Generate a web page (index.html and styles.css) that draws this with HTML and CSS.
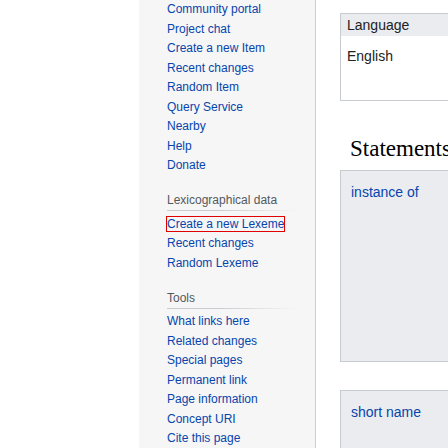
FILE: index.html
```html
<!DOCTYPE html>
<html>
<head>
<meta charset="utf-8">
<link rel="stylesheet" href="styles.css">
</head>
<body>
<div class="page">
  <div class="gutter"></div>
  <nav class="panel">
    <div class="portal">
      <ul>
        <li><a href="#">Community portal</a></li>
        <li><a href="#">Project chat</a></li>
        <li><a href="#">Create a new Item</a></li>
        <li><a href="#">Recent changes</a></li>
        <li><a href="#">Random Item</a></li>
        <li><a href="#">Query Service</a></li>
        <li><a href="#">Nearby</a></li>
        <li><a href="#">Help</a></li>
        <li><a href="#">Donate</a></li>
      </ul>
    </div>
    <div class="portal">
      <h3 class="portal-title">Lexicographical data</h3>
      <ul>
        <li><a href="#" class="focused">Create a new Lexeme</a></li>
        <li><a href="#">Recent changes</a></li>
        <li><a href="#">Random Lexeme</a></li>
      </ul>
    </div>
    <div class="portal">
      <h3 class="portal-title">Tools</h3>
      <ul>
        <li><a href="#">What links here</a></li>
        <li><a href="#">Related changes</a></li>
        <li><a href="#">Special pages</a></li>
        <li><a href="#">Permanent link</a></li>
        <li><a href="#">Page information</a></li>
        <li><a href="#">Concept URI</a></li>
        <li><a href="#">Cite this page</a></li>
      </ul>
    </div>
  </nav>
  <main class="content">
    <div class="lang-box">
      <div class="lang-head">Language</div>
      <div class="lang-body">English</div>
    </div>
    <h2 class="statements">Statements</h2>
    <div class="stmt"><a href="#">instance of</a></div>
    <div class="stmt stmt-next"><a href="#">short name</a></div>
  </main>
</div>
</body>
</html>
```
FILE: styles.css
```css
html, body {
  margin: 0;
  padding: 0;
  height: 448px;
  overflow: hidden;
  background: #fff;
}

.page {
  display: flex;
  height: 448px;
  font-family: "Liberation Sans", Arial, sans-serif;
}

a {
  color: #0645ad;
  text-decoration: none;
}

.gutter {
  width: 139px;
  flex: none;
  background: #fff;
}

.panel {
  flex: none;
  width: 130px;
  padding: 0 18px 0 28px;
  background: #f6f6f6;
  border-right: 1px solid #a7d7f9;
}

.portal ul {
  list-style: none;
  margin: 0;
  padding: 0;
}

.portal li {
  font-size: 12px;
  line-height: 13.5px;
  padding: 3px 0;
  white-space: nowrap;
}

.portal-title {
  font-size: 12px;
  font-weight: normal;
  color: #54595d;
  line-height: 14px;
  padding: 3px 0 4px;
  margin: 14.7px 0 3.5px;
  background: linear-gradient(to right, #c8ccd1 0, #c8ccd1 40%, rgba(200, 204, 209, 0) 100%) left bottom / 100% 1px no-repeat;
}

.focused {
  outline: 1px solid #e00000;
}

.content {
  flex: 1;
  min-width: 0;
  padding: 13px 0 0 24px;
}

.lang-box {
  width: 300px;
  border: 1px solid #c8ccd1;
  background: #fff;
  font-size: 14px;
  color: #222;
}

.lang-head {
  background: #eaecf0;
  padding: 3px 6px;
  line-height: 16px;
}

.lang-body {
  padding: 12px 6px 0;
  height: 52px;
  line-height: 16px;
}

.statements {
  font-family: "Liberation Serif", "Times New Roman", serif;
  font-size: 23px;
  font-weight: normal;
  line-height: 30px;
  color: #000;
  margin: 33px 0 6px 10px;
  white-space: nowrap;
}

.stmt {
  width: 300px;
  height: 177px;
  border: 1px solid #c8ccd1;
  background: #eaecf0;
  padding: 13px 0 0 10px;
  font-size: 14px;
  line-height: 16px;
}

.stmt-next {
  margin-top: 28px;
}
```
